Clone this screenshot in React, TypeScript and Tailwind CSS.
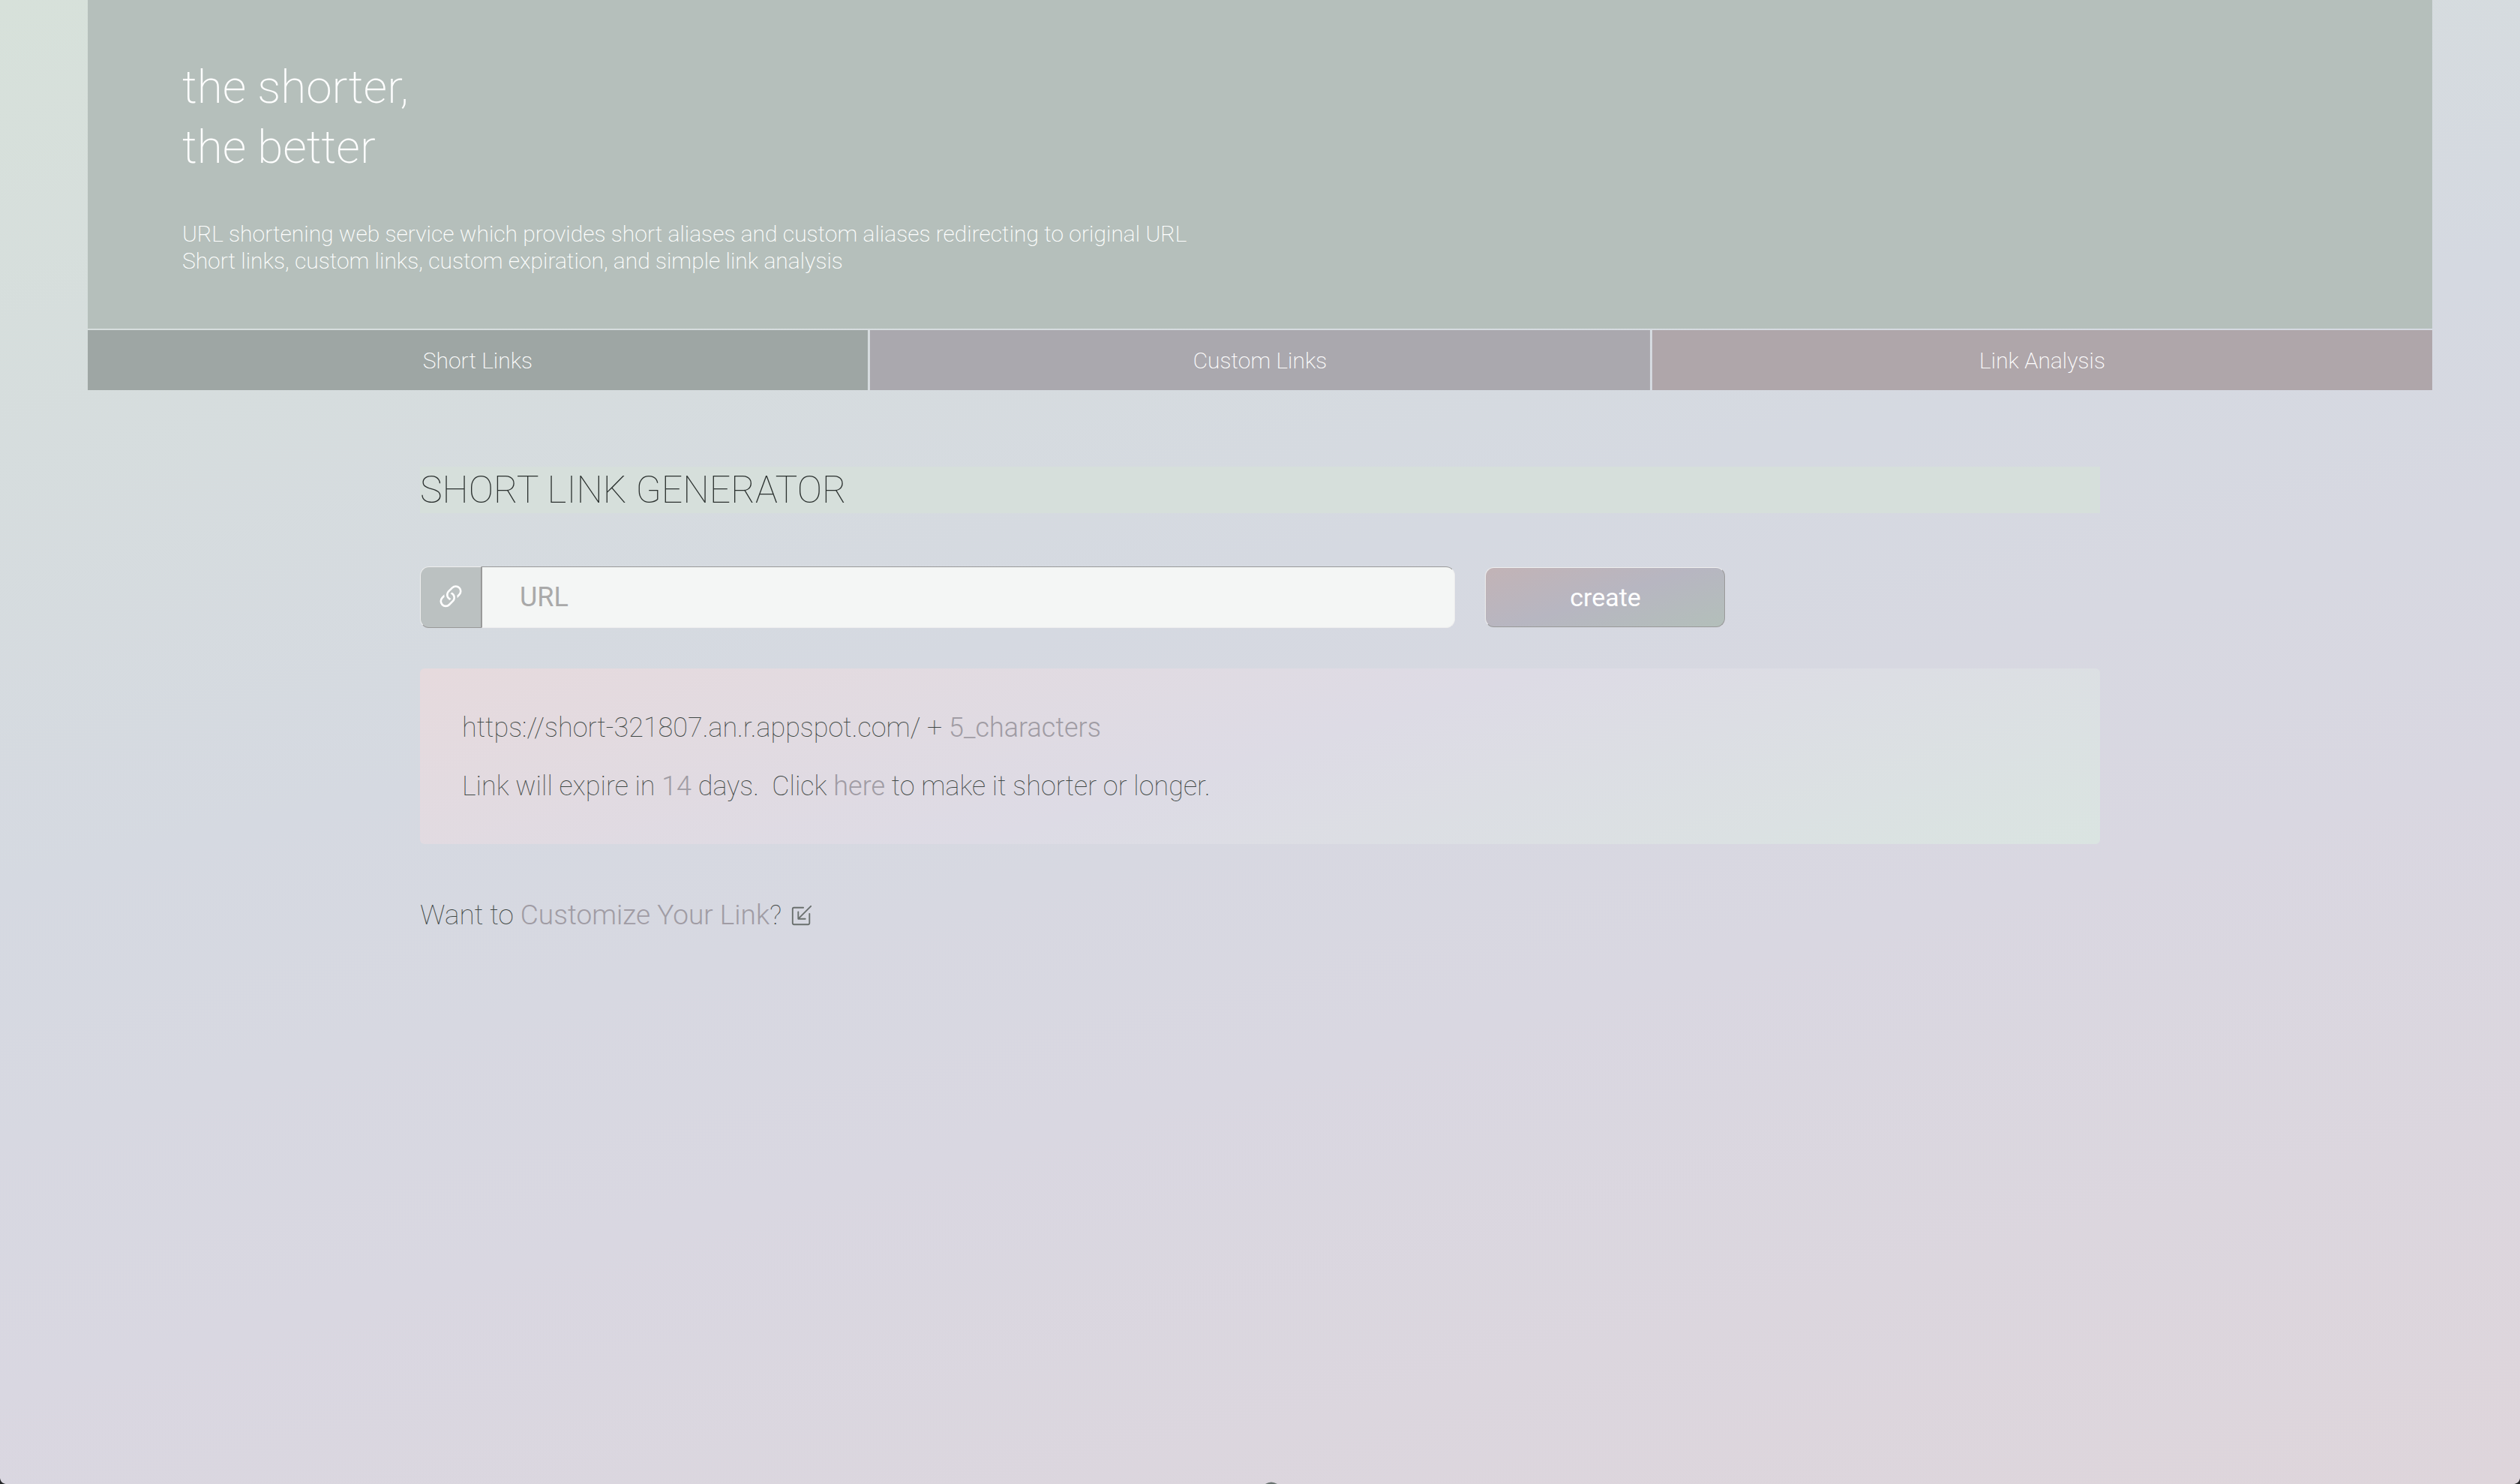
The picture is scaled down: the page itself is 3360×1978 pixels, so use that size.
import { BsBoxArrowInDownLeft, BsLink45Deg } from "react-icons/bs";

const tabs = [
  { label: "Short Links", className: "bg-[#9ea6a4]" },
  { label: "Custom Links", className: "bg-[#aaa8ae]" },
  { label: "Link Analysis", className: "bg-[#afa6aa]" },
];

function Header() {
  return (
    <header className="mx-[3.48%]">
      <div className="bg-[#b5bfbb] px-[126px] pt-[76px] pb-[72px] font-extralight text-white">
        <h1 className="text-[62px] leading-[80px]">
          the shorter,
          <br />
          the better
        </h1>
        <p className="mt-[58px] text-[30px] leading-9">
          URL shortening web service which provides short aliases and custom aliases redirecting to original URL
          <br />
          Short links, custom links, custom expiration, and simple link analysis
        </p>
      </div>
      <nav className="mt-[2px] grid grid-cols-3 gap-[3px]">
        {tabs.map((tab) => (
          <a
            key={tab.label}
            href="#"
            className={`flex h-20 items-center justify-center text-[30px] font-extralight text-white ${tab.className}`}
          >
            {tab.label}
          </a>
        ))}
      </nav>
    </header>
  );
}

function LinkForm() {
  return (
    <form className="mt-[71px] flex items-center gap-10 font-normal" onSubmit={(e) => e.preventDefault()}>
      <div className="flex h-[82px] flex-1">
        <label
          htmlFor="url"
          aria-label="URL"
          className="flex w-[82px] items-center justify-center rounded-l-xl border border-t-[#eeeeee] border-r-[#999999] border-b-[#999999] border-l-[#eeeeee] bg-[#bbc1c1] text-white"
        >
          <BsLink45Deg size={42} />
        </label>
        <input
          id="url"
          type="text"
          placeholder="URL"
          className="min-w-0 flex-1 rounded-r-xl border border-t-[#999999] border-r-[#eeeeee] border-b-[#eeeeee] border-l-[#999999] bg-[#f4f6f5] px-[50px] text-[36px] text-[#555555] outline-none placeholder:text-[#a9a9a9]"
        />
      </div>
      <button
        type="submit"
        className="mr-[22.3%] h-20 w-1/7 rounded-xl border border-t-[#eeeeee] border-r-[#999999] border-b-[#999999] border-l-[#eeeeee] bg-[linear-gradient(163deg,#c2b3b6,#b7b6c1_50%,#b3bfba)] text-[34px] text-white"
      >
        create
      </button>
    </form>
  );
}

export default function App() {
  return (
    <div className="relative min-h-screen overflow-hidden bg-[linear-gradient(166deg,#d7e1da,#d5d9e1_42%,#d9d7e1_66%,#ded5db)] font-['Roboto',sans-serif]">
      <Header />
      <main className="mx-auto w-2/3 font-thin text-[#3f4744]">
        <h2 className="mt-[102px] bg-[#d6dfdb] text-[50px] leading-[62px] text-[#2b312f]">
          SHORT LINK GENERATOR
        </h2>
        <LinkForm />
        <section className="mt-[54px] rounded-md bg-[linear-gradient(163deg,#e6dadd,#dddbe5_50%,#dae4e1)] px-14 pt-10 pb-[38px] text-[36px] leading-[78px]">
          <p>
            https://short-321807.an.r.appspot.com/ + <span className="font-light text-[#a09ca4]">5_characters</span>
          </p>
          <p>
            Link will expire in <span className="font-light text-[#a09ca4]">14</span> days.&nbsp; Click{" "}
            <a href="#" className="font-light text-[#a09ca4]">
              here
            </a>{" "}
            to make it shorter or longer.
          </p>
        </section>
        <p className="mt-14 flex items-center text-[37px] leading-[78px]">
          <span>
            Want to{" "}
            <a href="#" className="font-light text-[#a09ca4]">
              Customize Your Link
            </a>
            ?
          </span>
          <BsBoxArrowInDownLeft size={30} className="ml-3 text-[#6a706e]" />
        </p>
      </main>
      <svg className="absolute bottom-0 left-0 size-2" viewBox="0 0 12 12" aria-hidden="true">
        <path d="M0 0C1 7 5 11 12 12H0Z" fill="#26282a" />
      </svg>
      <svg className="absolute right-0 bottom-0 size-2" viewBox="0 0 12 12" aria-hidden="true">
        <path d="M12 0C11 7 7 11 0 12H12Z" fill="#26282a" />
      </svg>
      <svg className="absolute bottom-0 left-[50.2%] h-[3px] w-4" viewBox="0 0 16 3" aria-hidden="true">
        <path d="M0 3Q8-2 16 3Z" fill="#6a7371" />
      </svg>
    </div>
  );
}
